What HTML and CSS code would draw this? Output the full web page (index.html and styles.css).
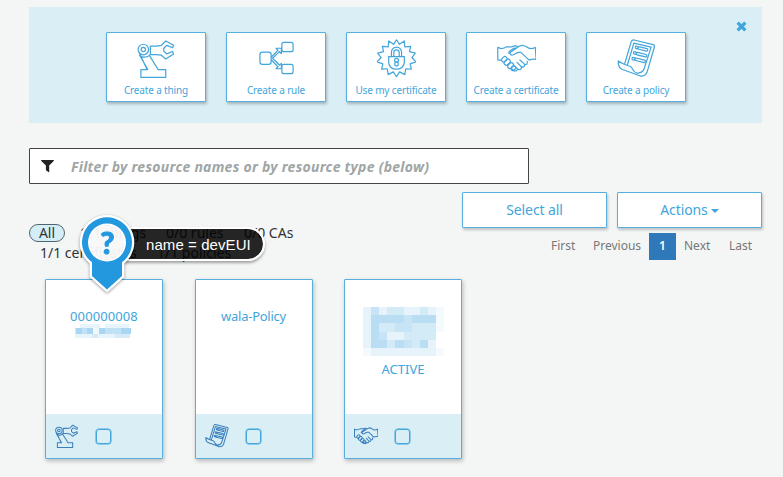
FILE: index.html
```html
<!DOCTYPE html>
<html lang="en">
<head>
<meta charset="utf-8">
<title>Resources</title>
<link rel="stylesheet" href="styles.css">
</head>
<body>
<svg class="sprite" aria-hidden="true">
  <symbol id="robot" viewBox="0 0 40 40">
    <circle cx="6.5" cy="10.8" r="5.4"/><circle cx="6.5" cy="10.8" r="2.2"/>
    <path d="M13.700 7.300h6.500l4.800-.8L29.500 2l8 4.500-1 2.500-6-2.500-3 3v3l3 2.800 6-2.500 1 2.500-8 5.200-4.800-4-5-.5h-6zM2.700 15l7.500 16M12.500 17c-2 2-7 2.500-10-.5M12.500 16.500l9 14.500M2.700 16.500L11 31.300H4v8h25.500v-8h-8"/>
  </symbol>
  <symbol id="rule" viewBox="0 0 40 40">
    <rect x="3" y="13.500" width="11.500" height="12.500" rx="2.500"/><rect x="25.500" y="3.500" width="11.500" height="9.500" rx="2"/><rect x="25.500" y="26" width="11.500" height="9.500" rx="2"/>
    <path d="M14.800 18.500l6.700-7-2-2h5.500v5.300l-2-1.800-7 6.700 7 7 2-1.700v5.500h-5.500l2-2-6.700-7"/>
  </symbol>
  <symbol id="seal" viewBox="0 0 40 40">
    <path d="M20 .8l3 4.700 5-3.500.5 6 6-.5-1.200 5.500 6 1.500-3.500 4.500 4 4.500-5.800 2 1.300 5.500-5.800-.5-1 6-5.300-2.800-3.200 5-3.200-5-5.300 2.800-1-6-5.800.5L6 25.500 0 23.500 4.200 19 .7 14.500l6-1.500L5.500 7.500l6 .5.5-6 5 3.500z"/>
    <path d="M12 18h16v6.500q-1 6.500-8 6.500t-8-6.500zM14.800 18v-4.500a5.200 5.200 0 0 1 10.400 0V18M17.200 18v-4a2.800 2.800 0 0 1 5.600 0v4"/><circle cx="20" cy="21.800" r="2"/><rect x="18.300" y="23.600" width="3.400" height="4" rx="1.300"/>
  </symbol>
  <symbol id="hands" viewBox="0 0 40 40">
    <path d="M.8 8.500c3 2 6 1.500 9-.5h5.500M39.200 8.500c-3 2-6 2-9-.5-3-2-5-2-7-.8l-9 6c-2 1.800 0 4 2.500 3l5-2.500h2.800l8.500 8c3.200-1.500 4-1.200 7.200-.7zM.8 8.500v13l3.200.5M15.500 8c2-1.300 4-1.500 6 0M12 14.500c0-3 4-4 6.500-5.500"/>
    <path d="M31 23c.7 2.700-1 4-3 2.500l-4.500-4M28 25.500c1 2.500-1.200 4.500-3.500 2.500l-4-4M25 28.500c.5 2.500-2 3.800-4 2l-3-3M21 30.500c0 2.300-2.500 3-4 1.500l-2-1.500"/>
    <rect x="4.500" y="19" width="6" height="4.300" rx="2" transform="rotate(-45 7 21)"/><rect x="7" y="22" width="7" height="4.300" rx="2" transform="rotate(-45 10 24)"/><rect x="10.500" y="25" width="6.500" height="4.300" rx="2" transform="rotate(-45 14 27)"/><rect x="14" y="28.500" width="5" height="4" rx="2" transform="rotate(-45 16 30)"/>
  </symbol>
  <symbol id="scroll" viewBox="0 0 40 40">
    <path d="M14.500 3q.7-2.300 3-2L37 5.800q2 .7 1.300 2.700L31 33.500q-2 5-7 4.500L5 31Q1 29 1.300 22.500c4 3 8 4 12 5.500 3.700 1.500 2.200 6 7.200 7q6 0 7.500-5L35 8.300 17.300 4.200l-6.500 22M14.500 3L8 25"/>
    <g transform="rotate(14 20 16)"><rect x="17" y="7.500" width="3" height="2.600" rx="1.300"/><rect x="20" y="7.500" width="10" height="2.600" rx="1"/><rect x="16.500" y="13.500" width="3" height="2.600" rx="1.300"/><rect x="19.500" y="13.500" width="11" height="2.600" rx="1"/><rect x="16.500" y="19.500" width="3" height="2.600" rx="1.300"/><rect x="19.500" y="19.500" width="11" height="2.600" rx="1"/></g>
  </symbol>
</svg>

<main class="page">
  <section class="banner">
    <div class="tiles">
      <a class="tile"><svg class="icon"><use href="#robot"/></svg><span>Create a thing</span></a>
      <a class="tile"><svg class="icon"><use href="#rule"/></svg><span>Create a rule</span></a>
      <a class="tile"><svg class="icon"><use href="#seal"/></svg><span>Use my certificate</span></a>
      <a class="tile"><svg class="icon"><use href="#hands"/></svg><span>Create a certificate</span></a>
      <a class="tile"><svg class="icon"><use href="#scroll"/></svg><span>Create a policy</span></a>
    </div>
    <svg class="close" viewBox="0 0 10 10"><path d="M1.500 1.500l7 7M8.500 1.500l-7 7"/></svg>
  </section>

  <div class="search">
    <svg class="funnel" viewBox="0 0 13 13"><path d="M.3 0h12.400q.4.600 0 1L8.200 5.600V12.600L4.900 10.200V5.600L.3 1q-.5-.5 0-1z"/></svg>
    <span>Filter by resource names or by resource type (below)</span>
  </div>

  <div class="toolbar">
    <div class="filters">
      <div class="filter-row"><span class="pill">All</span><span class="f-things">1/1 things</span><span class="f-rules">0/0 rules</span><span>0/0 CAs</span></div>
      <div class="filter-row second"><span class="f-certs">1/1 certificates</span><span>1/1 policies</span></div>
      <div class="marker">
        <div class="label">name = devEUI</div>
        <svg class="pin" viewBox="0 0 64 84">
          <path class="pin-edge" fill-rule="evenodd" d="M32 4a27.300 27.300 0 0 0-17.300 48.400V66L32 81.500 49.300 66V52.400A27.300 27.300 0 0 0 32 4zM32 14.500a17 17 0 1 1 0 34 17 17 0 0 1 0-34z"/>
          <path class="pin-body" fill-rule="evenodd" d="M32 6.300A25 25 0 0 0 17 51.300V65L32 78.500 47 65V51.300A25 25 0 0 0 32 6.300zM32 12.500a19 19 0 1 1 0 38 19 19 0 0 1 0-38z"/>
          <circle class="pin-face" cx="32" cy="31.500" r="17.300"/>
          <text class="pin-mark" x="32.500" y="43">?</text>
        </svg>
      </div>
    </div>
    <div class="controls">
      <div class="buttons"><button class="button select">Select all</button><button class="button actions">Actions<i class="caret"></i></button></div>
      <nav class="pager"><a class="first">First</a><a class="previous">Previous</a><a class="current">1</a><a class="next">Next</a><a class="last">Last</a></nav>
    </div>
  </div>

  <section class="cards">
    <article class="card">
      <div class="card-body"><span class="digits">000000008</span>
        <svg class="mosaic-small" viewBox="0 0 60 16" shape-rendering="crispEdges">
          <g fill="#e8f4fb"><path d="M6 1h20v4H6zM31 1h24v4H31z"/><path d="M1 11h55v4H1z"/></g>
          <g fill="#d5ebf8"><path d="M1 5h56v6H1zM18 11h6v4H18zM41 11h15v4H41z"/></g>
          <g fill="#a9d6f2"><path d="M2 5h6v6H2zM13 5h6v6h-6zM25 5h6v6h-6zM47 5h10v6H47z"/></g>
          <path fill="#c1e1f5" d="M8 5h5v6H8zM31 5h16v6H31z"/><path fill="#f0f8fc" d="M19 5h6v6h-6z"/>
        </svg>
      </div>
      <footer><svg class="icon"><use href="#robot"/></svg><i class="check"></i></footer>
    </article>
    <article class="card">
      <div class="card-body"><span class="policy">wala-Policy</span></div>
      <footer><svg class="icon"><use href="#scroll"/></svg><i class="check"></i></footer>
    </article>
    <article class="card">
      <div class="card-body">
        <svg class="mosaic-large" viewBox="0 0 10 6" preserveAspectRatio="none" shape-rendering="crispEdges">
          <path fill="#e6f3fb" d="M0 0h9v6H0z"/>
          <path fill="#f4fafd" d="M9 0h1v3H9zM0 5h1v1H0zM9 5h1v1H9z"/>
          <path fill="#d3eaf7" d="M1 0h1v5H1zM3 0h2v1H3zM7 0h1v1H7zM2 2h2v1H2zM6 2h3v1H6zM5 3h4v1H5zM3 4h1v1H3zM6 4h2v1H6z"/>
          <path fill="#b9def4" d="M1 1h4v1H1zM6 1h3v1H6zM1 2h1v1H1zM1 3h1v1H1zM1 4h2v1H1zM4 4h1v1H4zM7 4h1v1H7z"/>
          <path fill="#c6e4f6" d="M1 0h1v1H1zM5 1h1v1H5zM4 2h2v1H4zM2 3h1v1H2zM5 4h1v1H5z"/>
        </svg>
        <span class="active">ACTIVE</span>
      </div>
      <footer><svg class="icon"><use href="#hands"/></svg><i class="check"></i></footer>
    </article>
  </section>
</main>
</body>
</html>
```
FILE: styles.css
```css
* { box-sizing: border-box; }
body { margin: 0; height: 477px; overflow: hidden; background: #f4f6f6; font: 14px "Noto Sans", sans-serif; color: #333; }
.sprite { display: none; }
.page { padding: 7px 21px 0 29px; }
.icon { fill: none; stroke: currentColor; stroke-linejoin: round; stroke-linecap: round; }

.banner { position: relative; height: 116px; padding: 25px 77px 0; background: #d9eff5; }
.tiles { display: flex; gap: 20px; }
.tile { width: 100px; height: 70px; flex: none; display: flex; flex-direction: column; align-items: center; padding-top: 6px; border: 1px solid #57afe0; background: #fff; color: #42a5dc; box-shadow: 1px 2px 3px rgba(0,0,0,.25); border-radius: 1px; }
.tile .icon { width: 39px; height: 39px; stroke-width: 1.25; }
.tile span { font-size: 10px; line-height: 14px; margin-top: 5px; white-space: nowrap; letter-spacing: -.15px; }
.close { position: absolute; top: 14px; right: 15px; width: 11px; height: 11px; fill: none; stroke: #42a5dc; stroke-width: 3; }

.search { width: 500px; height: 36px; margin-top: 25px; border: 1px solid #444; border-radius: 1px; background: #fff; display: flex; align-items: center; padding-left: 11px; }
.search span { margin-left: 17px; font: italic bold 14px "Noto Sans", sans-serif; color: #a0a6a6; white-space: nowrap; letter-spacing: .26px; }
.funnel { width: 13px; height: 13px; fill: #222; }

.toolbar { display: flex; justify-content: space-between; height: 68px; margin-top: 8px; }
.filters { position: relative; padding-top: 32px; width: 300px; white-space: nowrap; }
.filter-row { display: flex; height: 18px; line-height: 17px; }
.second { padding-left: 11px; margin-top: 2px; }
.pill { width: 36px; height: 18px; line-height: 15px; text-align: center; border: 1px solid #52646b; border-radius: 9px; background: #d3eef7; margin-right: 15px; }
.f-things { width: 86px; }
.f-rules { width: 78px; }
.f-certs { width: 117px; }

.marker { position: absolute; left: 46px; top: 18.500px; width: 190px; height: 84px; z-index: 2; }
.label { position: absolute; left: 48px; top: 16px; width: 142px; height: 34px; padding-left: 21px; border: 2px solid #fff; border-radius: 0 17px 17px 0; background: rgba(0,0,0,.85); background-clip: padding-box; color: #fff; font: 15px/31px "Liberation Sans", sans-serif; letter-spacing: .08px; box-shadow: 0 2px 3px rgba(0,0,0,.35); }
.pin { position: absolute; left: 0; top: 0; width: 64px; height: 84px; filter: drop-shadow(0 1px 1.500px rgba(0,0,0,.4)); }
.pin-edge { fill: #fff; }
.pin-body { fill: #2398df; }
.pin-face { fill: #fff; fill-opacity: .93; }
.pin-mark { fill: #2398df; stroke: #2398df; stroke-width: 1.2; stroke-linejoin: round; font: bold 31px Lato, sans-serif; text-anchor: middle; }

.controls { width: 300px; }
.buttons { display: flex; gap: 10px; }
.button { width: 145px; height: 36px; padding: 0 0 2px; border: 1px solid #57afe0; border-radius: 1px; background: #fff; color: #42a5dc; font: 14px "Noto Sans", sans-serif; letter-spacing: -.1px; box-shadow: 1px 2px 3px rgba(0,0,0,.22); }
.caret { display: inline-block; margin-left: 3px; vertical-align: 2px; border: 4px solid transparent; border-top-color: #42a5dc; border-bottom: 0; }
.pager { display: flex; margin-top: 5px; height: 27px; line-height: 26px; font-size: 12px; color: #777; padding-left: 89px; }
.first { width: 42px; }
.previous { width: 56px; }
.current { width: 27px; text-align: center; background: #2f78b9; color: #fff; font-weight: 600; }
.next { width: 53px; padding-left: 8px; }

.cards { display: flex; gap: 31.500px; padding-left: 16px; margin-top: 19px; }
.card { width: 118px; height: 180px; display: flex; flex-direction: column; border: 1px solid #57afe0; border-radius: 1px; background: #fff; box-shadow: 1px 2px 4px rgba(0,0,0,.25); }
.card-body { flex: 1; display: flex; flex-direction: column; align-items: center; padding-top: 26px; color: #42a5dc; font-size: 13px; line-height: 20px; }
.policy { letter-spacing: -.25px; }
.digits { letter-spacing: .1px; }
.mosaic-small { width: 60px; height: 16px; margin-top: -3px; }
.mosaic-large { width: 81px; height: 49px; margin-top: 1px; }
.active { margin-top: 3px; }
.card footer { height: 44px; display: flex; align-items: center; background: #d9eff5; padding: 0 0 0 9px; color: #397fbc; }
.card footer .icon { width: 24px; height: 24px; stroke-width: 1.700; }
.check { width: 15px; height: 15px; margin-left: 17px; border: 1.500px solid #42a5dc; border-radius: 3px; box-shadow: 0 0 0 .5px #42a5dc; }
```
